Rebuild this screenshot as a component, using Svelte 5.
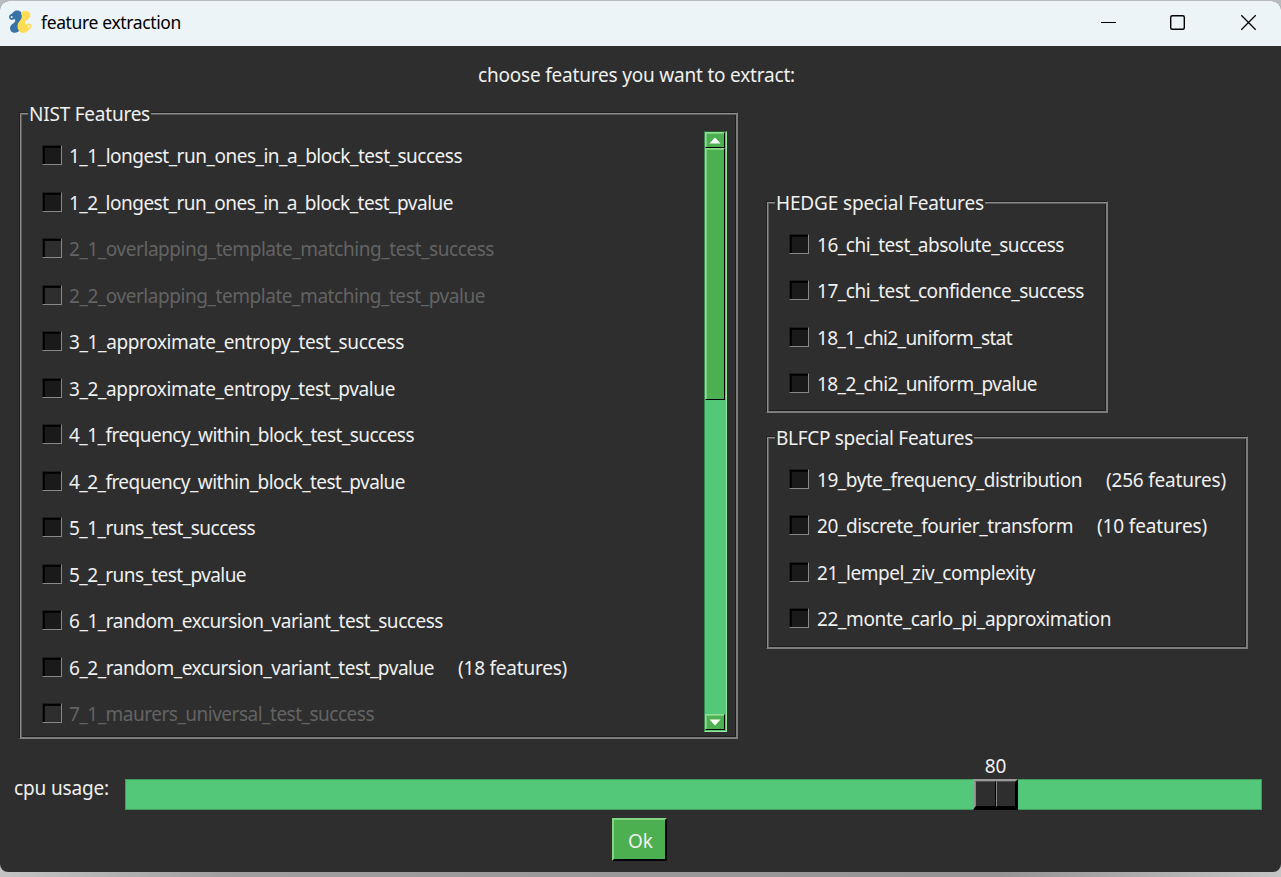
<script>
  const nist = [
    { label: '1_1_longest_run_ones_in_a_block_test_success', width: 393 },
    { label: '1_2_longest_run_ones_in_a_block_test_pvalue', width: 384 },
    { label: '2_1_overlapping_template_matching_test_success', width: 425, disabled: true },
    { label: '2_2_overlapping_template_matching_test_pvalue', width: 416, disabled: true },
    { label: '3_1_approximate_entropy_test_success', width: 335 },
    { label: '3_2_approximate_entropy_test_pvalue', width: 326 },
    { label: '4_1_frequency_within_block_test_success', width: 345 },
    { label: '4_2_frequency_within_block_test_pvalue', width: 336 },
    { label: '5_1_runs_test_success', width: 186 },
    { label: '5_2_runs_test_pvalue', width: 177 },
    { label: '6_1_random_excursion_variant_test_success', width: 374 },
    { label: '6_2_random_excursion_variant_test_pvalue', width: 365, note: '(18 features)', noteWidth: 109 },
    { label: '7_1_maurers_universal_test_success', width: 305, disabled: true }
  ];
  const hedge = [
    { label: '16_chi_test_absolute_success', width: 247 },
    { label: '17_chi_test_confidence_success', width: 267 },
    { label: '18_1_chi2_uniform_stat', width: 195 },
    { label: '18_2_chi2_uniform_pvalue', width: 220 }
  ];
  const blfcp = [
    { label: '19_byte_frequency_distribution', width: 265, note: '(256 features)', noteWidth: 120 },
    { label: '20_discrete_fourier_transform', width: 256, note: '(10 features)', noteWidth: 110 },
    { label: '21_lempel_ziv_complexity', width: 218 },
    { label: '22_monte_carlo_pi_approximation', width: 294 }
  ];

  function fit(node, width) {
    const apply = () => {
      node.style.letterSpacing = '0px';
      const natural = node.getBoundingClientRect().width;
      node.style.letterSpacing = (width - natural) / node.textContent.length + 'px';
    };
    apply();
    document.fonts?.ready.then(apply);
  }
</script>

{#snippet row(item)}
  <div class="row" class:disabled={item.disabled}>
    <span class="box"></span>
    <span class="label" use:fit={item.width}>{item.label}</span>
    {#if item.note}<span class="note" use:fit={item.noteWidth}>{item.note}</span>{/if}
  </div>
{/snippet}

<div class="desktop">
  <div class="window">
    <header>
      <svg class="logo" width="24" height="24" viewBox="0 0 24 24">
        <path d="M13.300 2.400C12 .7 9.500.1 7.300.8 5.300 1.500 4.800 3.200 3.300 3.900 1.300 4.700.6 6.400 1.200 8.100c.7 1.800 2.600 2.300 4 1.400 1.100-.7 2.200-.2 2.100 1C7.200 12.200 5.600 13 4 14.300 1.900 16 1.400 18.700 2.700 20.700c1.400 2.200 4.700 2.600 7 1.300 1-.5 1.300-1.200 1.700-2.100C10 17 10.600 14.700 12.700 12.500 15.300 9.700 15.600 6 13.300 2.400Z" fill="#3773a5"/>
        <path d="M13.300 2.400C12 .7 9.500.1 7.300.8 5.300 1.500 4.800 3.200 3.300 3.900 1.300 4.700.6 6.400 1.200 8.100c.7 1.800 2.600 2.300 4 1.400 1.100-.7 2.200-.2 2.100 1C7.200 12.200 5.600 13 4 14.300 1.900 16 1.400 18.700 2.700 20.700c1.400 2.200 4.700 2.600 7 1.300 1-.5 1.300-1.200 1.700-2.100C10 17 10.600 14.700 12.700 12.500 15.300 9.700 15.600 6 13.300 2.400Z" fill="#ffdc55" transform="rotate(180 12.200 11.700)"/>
        <circle cx="3.600" cy="6.900" r="1" fill="#edf4f8"/>
        <circle cx="20.800" cy="16.500" r="1" fill="#edf4f8"/>
      </svg>
      <span class="title" use:fit={140}>feature extraction</span>
      <svg class="controls" width="160" height="20" viewBox="0 0 160 20" fill="none" stroke="#000">
        <path d="M1 10.500h15" stroke-width="1"/>
        <rect x="70.700" y="3.700" width="13.600" height="13.600" rx="1.500" stroke-width="1.400"/>
        <path d="M141.300 3.300l14.400 14.400M155.700 3.300L141.300 17.700" stroke-width="1.300"/>
      </svg>
    </header>

    <p class="prompt"><span class="label" use:fit={317}>choose features you want to extract:</span></p>

    <main>
      <section class="frame nist">
        <h2><span use:fit={121}>NIST Features</span></h2>
        <div class="rows">{#each nist as item}{@render row(item)}{/each}</div>
        <div class="scrollbar">
          <div class="arrow"><svg width="12" height="7" viewBox="0 0 12 7"><path d="M6 .5L11.500 6.500H.5z" fill="#fff"/></svg></div>
          <div class="thumb"></div>
          <div class="trough"></div>
          <div class="arrow"><svg width="12" height="7" viewBox="0 0 12 7"><path d="M6 6.500L11.500.5H.5z" fill="#fff"/></svg></div>
        </div>
      </section>
      <div class="side">
        <section class="frame hedge">
          <h2><span use:fit={208}>HEDGE special Features</span></h2>
          <div class="rows">{#each hedge as item}{@render row(item)}{/each}</div>
        </section>
        <section class="frame blfcp">
          <h2><span use:fit={197}>BLFCP special Features</span></h2>
          <div class="rows">{#each blfcp as item}{@render row(item)}{/each}</div>
        </section>
      </div>
    </main>

    <div class="cpu">
      <span class="caption" use:fit={95}>cpu usage:</span>
      <div class="slider">
        <div class="handle"><span class="value">80</span><i></i><i></i></div>
      </div>
    </div>
    <div class="actions"><button><span use:fit={25}>Ok</span></button></div>
  </div>
</div>

<style>
  :global(body) { margin: 0; overflow: hidden; }
  .desktop {
    width: 1281px; height: 877px; box-sizing: border-box; padding-top: 1px;
    background: linear-gradient(#b9bcbe 0 860px, transparent 860px), linear-gradient(90deg, #c4c4c4, #a09e9f 230px, #959394 1000px, #c5c4c4);
    font: 19px/26px "Noto Sans", "Open Sans", sans-serif; color: #f0f0f0;
  }
  .window {
    height: 871px; background: #2e2e2e; border-radius: 9px 9px 8px 8px;
    overflow: hidden; display: flex; flex-direction: column;
  }
  header {
    height: 45px; flex: none; box-sizing: border-box; display: flex; align-items: center;
    padding: 0 21px 4px 8px; background: #edf4f8; color: #000; font-size: 17.500px;
  }
  .title { margin-left: 9px; }
  .controls { margin-left: auto; }
  span { white-space: pre; }
  .prompt { margin: 0; height: 66px; flex: none; box-sizing: border-box; padding: 16px 0 0 478px; }
  main { flex: none; height: 628px; display: flex; gap: 29px; padding-left: 19px; }
  .frame {
    position: relative; box-sizing: border-box; display: flex;
    border: 1px solid; border-color: #202020 #7c7c7c #7c7c7c #202020;
    box-shadow: inset 1px 1px #8c8c8c, inset -1px -1px #7c7c7c, inset 2px 2px #5c5c5c, inset -2px -2px #1d1d1d;
  }
  h2 {
    position: absolute; left: 8px; top: -12px; margin: 0; padding: 0 1px;
    font: inherit; background: #2e2e2e;
  }
  .nist { width: 719px; height: 627px; padding: 20px 10px 5px 22px; justify-content: space-between; }
  .rows { display: flex; flex-direction: column; }
  .row { height: 46.500px; flex: none; display: flex; align-items: flex-start; }
  .label, .note { margin-top: 10px; }
  .prompt .label { margin-top: 0; }
  .note { margin-left: 24px; }
  .box {
    width: 20px; height: 20px; flex: none; box-sizing: border-box; margin: 12px 7px 0 0;
    border: 1px solid; border-color: #1e1e1e #888 #888 #1e1e1e;
    box-shadow: inset 1px 1px #000, inset 2px 2px #050505; background: #1a1a1a;
  }
  .disabled { color: #636363; }
  .disabled .box { background: #2e2e2e; }
  .nist .rows { height: 600px; overflow: hidden; }
  .scrollbar {
    width: 23px; height: 601px; margin-top: -2px; box-sizing: border-box;
    display: flex; flex-direction: column; background: #52c878;
    border: 1px solid; border-color: #286032 #9ae8a0 #9ae8a0 #3b8350;
  }
  .arrow, .thumb {
    width: 20px; box-sizing: border-box; background: #4caf50;
    border: 1px solid; border-color: #8ce08e #000 #000 #8ce08e;
    box-shadow: inset 1px 1px #79cf7c;
  }
  .arrow { height: 16px; flex: none; display: flex; align-items: center; justify-content: center; }
  .thumb { height: 252px; flex: none; }
  .trough { flex: 1; }
  .arrow:last-child { margin-bottom: 1px; }
  .side { padding-top: 89px; display: flex; flex-direction: column; gap: 23px; }
  .side .frame { padding: 19.600px 0 0 22px; margin-left: -1px; }
  .side .box { margin-right: 8px; }
  .side h2 { left: 8px; }
  .hedge { width: 342px; height: 212px; }
  .blfcp { width: 482px; height: 213px; }
  .cpu { height: 78px; flex: none; display: flex; box-sizing: border-box; padding: 39px 0 0 14px; }
  .caption { margin-top: -4px; }
  .slider {
    width: 1137px; height: 31px; margin-left: 16px; box-sizing: border-box;
    background: #52c878; border: 1px solid #3f9c5e; padding-left: 847px;
  }
  .handle {
    position: relative; width: 45px; height: 31px; margin-top: -1px; display: flex; box-sizing: border-box;
    background: #2e2e2e; border: 2px solid; border-color: #999 #000 #000 #999; border-bottom-width: 3px;
  }
  .handle i { flex: 1; box-sizing: border-box; border: 1px solid; border-color: #555 #000 #000 #888; }
  .value { position: absolute; left: 0; right: 0; top: -28px; text-align: center; letter-spacing: -.2px; }
  .actions { display: flex; justify-content: center; padding-right: 2px; }
  button {
    width: 55px; height: 43px; box-sizing: border-box; padding: 3px 0 0 2px; margin: 0;
    font: inherit; color: #f0f0f0; background: #4caf50;
    border: 2px solid; border-color: #82d785 #000 #000 #82d785;
  }
</style>
